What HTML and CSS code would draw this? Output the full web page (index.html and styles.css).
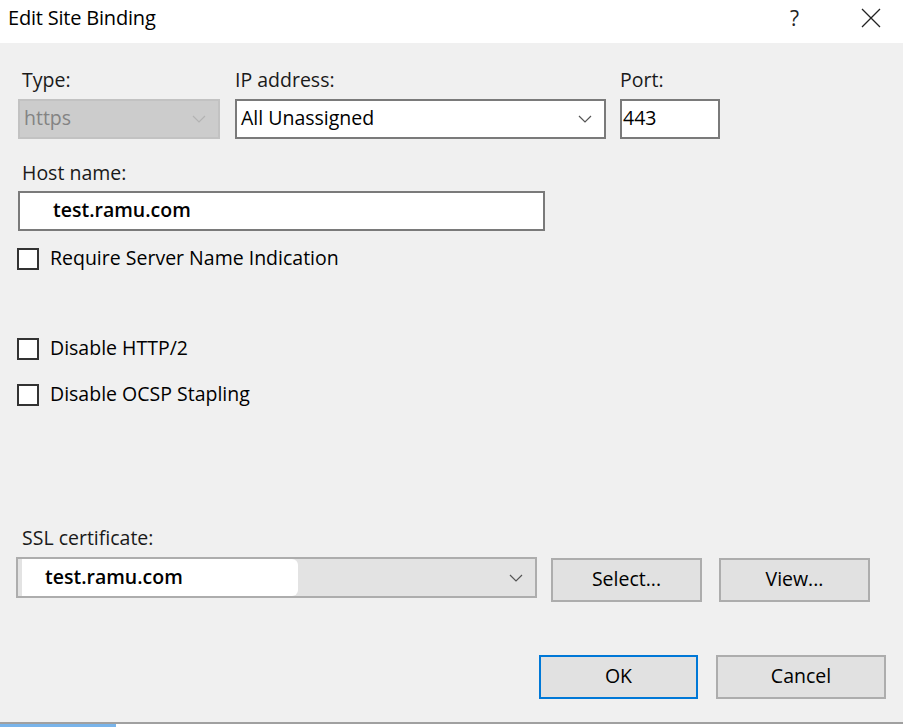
FILE: index.html
```html
<!DOCTYPE html>
<html>
<head>
<meta charset="utf-8">
<link rel="stylesheet" href="styles.css">
</head>
<body>
<div class="dialog">
  <div class="titlebar">
    <div class="title">Edit Site Binding</div>
    <div class="help">?</div>
    <div class="close">
      <svg width="22" height="22" viewBox="0 0 22 22"><path d="M2 2 L20 20 M20 2 L2 20" stroke="#222" stroke-width="1.3" fill="none"/></svg>
    </div>
  </div>
  <div class="content">
    <div class="row1">
      <div class="field">
        <div class="label">Type:</div>
        <div class="combo disabled">
          <span class="val">https</span>
          <svg class="chev" width="14" height="8" viewBox="0 0 14 8"><path d="M1 1 L7 7 L13 1" stroke="#b3b3b3" stroke-width="1.2" fill="none"/></svg>
        </div>
      </div>
      <div class="field">
        <div class="label">IP address:</div>
        <div class="combo">
          <span class="val">All Unassigned</span>
          <svg class="chev" width="14" height="8" viewBox="0 0 14 8"><path d="M1 1 L7 7 L13 1" stroke="#555" stroke-width="1.2" fill="none"/></svg>
        </div>
      </div>
      <div class="field">
        <div class="label">Port:</div>
        <div class="textbox port">443</div>
      </div>
    </div>
    <div class="host">
      <div class="label">Host name:</div>
      <div class="textbox hostbox"><span class="strong">test.ramu.com</span></div>
    </div>
    <div class="check c1"><span class="box"></span><span>Require Server Name Indication</span></div>
    <div class="check c2"><span class="box"></span><span>Disable HTTP/2</span></div>
    <div class="check c3"><span class="box"></span><span>Disable OCSP Stapling</span></div>
    <div class="ssl">
      <div class="label">SSL certificate:</div>
      <div class="sslrow">
        <div class="combo sslcombo">
          <span class="redact"><span class="strong">test.ramu.com</span></span>
          <svg class="chev" width="14" height="8" viewBox="0 0 14 8"><path d="M1 1 L7 7 L13 1" stroke="#555" stroke-width="1.2" fill="none"/></svg>
        </div>
        <div class="btn sel">Select...</div>
        <div class="btn view">View...</div>
      </div>
    </div>
    <div class="actions">
      <div class="btn ok">OK</div>
      <div class="btn cancel">Cancel</div>
    </div>
  </div>
  <div class="bottom">
    <div class="line"></div>
    <div class="strip"><span class="blue"></span></div>
  </div>
</div>
</body>
</html>
```

FILE: styles.css
```css
* { box-sizing: border-box; }
html, body { margin: 0; padding: 0; }
body {
  font-family: "Open Sans", "Noto Sans", sans-serif;
  font-size: 19.5px;
  color: #000;
  background: #f0f0f0;
}
.dialog {
  width: 903px;
  height: 727px;
  display: flex;
  flex-direction: column;
  background: #f0f0f0;
  overflow: hidden;
}
.titlebar {
  height: 43px;
  background: #fff;
  display: flex;
  align-items: center;
  flex: none;
}
.title {
  padding-left: 8px;
  font-size: 20px;
  letter-spacing: -0.2px;
  flex: 1;
  padding-bottom: 8px;
}
.help {
  font-size: 21px;
  width: 20px;
  margin-right: 50px;
  padding-bottom: 8px;
  color: #222;
}
.close {
  width: 22px;
  height: 22px;
  margin-right: 21px;
  margin-bottom: 8px;
  display: flex;
}
.content {
  flex: 1;
  padding: 25px 0 0 0;
  display: flex;
  flex-direction: column;
}
.label {
  height: 24px;
  line-height: 24px;
  padding-left: 4px;
  color: #1a1a1a;
}
.row1 {
  display: flex;
  padding-left: 18px;
  gap: 15px;
}
.row1 .field:nth-child(1) { width: 202px; }
.row1 .field:nth-child(2) { width: 371px; }
.row1 .field:nth-child(3) { width: 100px; margin-left: -1px; }
.row1 .field:nth-child(2) .label,
.row1 .field:nth-child(3) .label { padding-left: 0; }
.row1 .combo, .row1 .textbox { margin-top: 7px; }
.combo {
  height: 40px;
  display: flex;
  align-items: center;
  justify-content: space-between;
  background: #fff;
  border: 2px solid #7a7a7a;
  padding: 0 12px 0 4px;
}
.combo .val { padding-bottom: 3px; }
.combo.disabled {
  background: #cccccc;
  border: 2px solid #c2c2c2;
  color: #838383;
  padding-left: 4px;
}
.textbox {
  height: 40px;
  background: #fff;
  border: 2px solid #7a7a7a;
  display: flex;
  align-items: center;
  padding: 0 0 3px 1px;
}
.host { margin-top: 22px; padding-left: 18px; }
.hostbox { margin-top: 6px; width: 527px; padding-left: 33px; }
.strong { font-weight: 600; font-size: 19.5px; }
.check {
  display: flex;
  align-items: center;
  gap: 11px;
  padding-left: 17px;
  height: 24px;
}
.check .box {
  width: 22px;
  height: 22px;
  border: 2px solid #333;
  background: #fff;
  flex: none;
}
.check span:last-child { padding-bottom: 3px; }
.c1 { margin-top: 16px; }
.c2 { margin-top: 66px; }
.c3 { margin-top: 22px; }
.ssl { margin-top: 119px; padding-left: 18px; }
.sslrow {
  display: flex;
  align-items: flex-start;
  margin-top: 7px;
}
.sslcombo {
  width: 521px;
  height: 41px;
  margin-left: -2px;
  background: #e3e3e3;
  border: 2px solid #adadad;
  padding-left: 4px;
}
.redact {
  background: #fff;
  height: 37px;
  width: 276px;
  display: flex;
  align-items: center;
  padding: 0 0 3px 23px;
  border-radius: 0 6px 6px 0;
}
.btn {
  height: 44px;
  background: #e1e1e1;
  border: 2px solid #adadad;
  display: flex;
  align-items: center;
  justify-content: center;
  padding-bottom: 3px;
}
.sel { width: 151px; margin-left: 14px; margin-top: 1px; }
.view { width: 151px; margin-left: 17px; margin-top: 1px; }
.actions {
  display: flex;
  padding-left: 539px;
  gap: 18px;
  margin-top: 53px;
}
.ok { width: 159px; border: 2px solid #0078d7; }
.cancel { width: 170px; }
.bottom { flex: none; margin-top: auto; }
.line { height: 2px; background: #a0a0a0; }
.strip { height: 3px; background: #fff; display: flex; }
.strip .blue { width: 116px; background: #79b4ea; }
```
